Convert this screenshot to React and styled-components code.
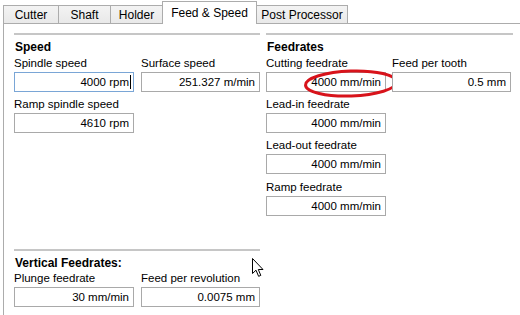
import React from "react";
import styled, { createGlobalStyle } from "styled-components";

const Global = createGlobalStyle`
  html, body { margin: 0; padding: 0; background: #fff; }
  body { width: 520px; height: 315px; overflow: hidden; font-family: "Liberation Sans", Arial, sans-serif; font-size: 11.5px; color: #000; }
`;

const Window = styled.div`
  width: 520px;
  height: 315px;
  display: flex;
  flex-direction: column;
  background: #fff;
  position: relative;
`;

const TabStrip = styled.div`
  display: flex;
  align-items: flex-end;
  height: 23px;
  padding-left: 3px;
  box-sizing: border-box;
`;

const Tab = styled.div`
  box-sizing: border-box;
  display: flex;
  align-items: center;
  justify-content: center;
  width: ${p => p.$w}px;
  height: ${p => (p.$active ? 23 : 18)}px;
  margin-left: -1px;
  margin-bottom: ${p => (p.$active ? -1 : 0)}px;
  border: 1px solid #acacac;
  border-bottom: none;
  background: ${p => (p.$active ? "#fff" : "linear-gradient(#f3f3f3, #e9e9e9)")};
  position: relative;
  z-index: ${p => (p.$active ? 2 : 1)};
  padding-top: ${p => (p.$active ? 0 : 1)}px;
  font-size: 12px;
  &:first-child { margin-left: 0; }
`;

const Panel = styled.div`
  flex: 1;
  border-top: 1px solid #acacac;
  border-left: 1px solid #acacac;
  margin-left: 3px;
  padding: 9px 0 0 10px;
  display: grid;
  grid-template-columns: 246px 247px;
  column-gap: 6px;
  position: relative;
`;

const Column = styled.div`
  display: flex;
  flex-direction: column;
`;

const Section = styled.section`
  display: flex;
  flex-direction: column;
  margin-top: ${p => p.$top || 0}px;
`;

const Rule = styled.div`
  height: 2px;
  background: #c6c6c6;
`;

const Heading = styled.div`
  font-weight: bold;
  font-size: 12px;
  line-height: 14px;
  margin: 5px 0 0 1px;
`;

const Row = styled.div`
  display: grid;
  grid-template-columns: 120px 119px;
  column-gap: ${p => p.$gap || 6}px;
`;

const Field = styled.div`
  display: flex;
  flex-direction: column;
  margin-top: ${p => p.$top ?? 5}px;
`;

const Label = styled.label`
  line-height: 14px;
  height: 14px;
  margin-bottom: 2px;
  white-space: nowrap;
`;

const InputWrap = styled.div`
  position: relative;
`;

const Box = styled.div`
  box-sizing: border-box;
  height: 20px;
  border: 1px solid ${p => (p.$focused ? "#7aa6d6" : "#a9a9a9")};
  background: #fff;
  display: flex;
  align-items: center;
  justify-content: flex-end;
  padding-right: ${p => (p.$focused ? 2 : 4)}px;
  white-space: nowrap;
`;

const Caret = styled.span`
  display: inline-block;
  width: 1px;
  height: 14px;
  background: #000;
  margin-left: 1px;
`;

const Annotation = styled.svg`
  position: absolute;
  left: 38px;
  top: -3px;
  pointer-events: none;
  overflow: visible;
`;

const Pointer = styled.svg`
  position: absolute;
  left: 252px;
  top: 258px;
  overflow: visible;
`;

function Input({ value, focused, circled }) {
  return (
    <InputWrap>
      <Box $focused={focused}>
        {value}
        {focused && <Caret />}
      </Box>
      {circled && (
        <Annotation width="94" height="29" viewBox="0 0 94 29">
          <ellipse cx="47" cy="14.5" rx="45.5" ry="12.5" fill="none" stroke="#d8131b" strokeWidth="3" transform="rotate(-2 47 14.5)" />
        </Annotation>
      )}
    </InputWrap>
  );
}

function F({ label, value, focused, circled, top }) {
  return (
    <Field $top={top}>
      <Label>{label}</Label>
      <Input value={value} focused={focused} circled={circled} />
    </Field>
  );
}

const tabs = [
  ["Cutter", 56],
  ["Shaft", 53],
  ["Holder", 53],
  ["Feed & Speed", 95],
  ["Post Processor", 92],
];

export default function App() {
  return (
    <Window>
      <Global />
      <TabStrip>
        {tabs.map(([t, w]) => (
          <Tab key={t} $w={w} $active={t === "Feed & Speed"}>{t}</Tab>
        ))}
      </TabStrip>
      <Panel>
        <Column>
          <Section>
            <Rule />
            <Heading>Speed</Heading>
            <Row $gap={7}>
              <F top={2} label="Spindle speed" value="4000 rpm" focused />
              <F top={2} label="Surface speed" value="251.327 m/min" />
            </Row>
            <Row>
              <F label="Ramp spindle speed" value="4610 rpm" />
            </Row>
          </Section>
          <Section $top={116}>
            <Rule />
            <Heading>Vertical Feedrates:</Heading>
            <Row $gap={7}>
              <F top={1} label="Plunge feedrate" value="30 mm/min" />
              <F top={1} label="Feed per revolution" value="0.0075 mm" />
            </Row>
          </Section>
        </Column>
        <Column>
          <Section>
            <Rule />
            <Heading>Feedrates</Heading>
            <Row>
              <F top={2} label="Cutting feedrate" value="4000 mm/min" circled />
              <F top={2} label="Feed per tooth" value="0.5 mm" />
            </Row>
            <Row>
              <F label="Lead-in feedrate" value="4000 mm/min" />
            </Row>
            <Row>
              <F label="Lead-out feedrate" value="4000 mm/min" />
            </Row>
            <Row>
              <F top={6} label="Ramp feedrate" value="4000 mm/min" />
            </Row>
          </Section>
        </Column>
      </Panel>
      <Pointer width="13" height="20" viewBox="0 0 13 20">
        <path d="M0.5 0.5 L0.5 15.5 L4 12.2 L6.6 18.3 L8.8 17.4 L6.3 11.5 L11 11.5 Z" fill="#fff" stroke="#000" strokeWidth="1" strokeLinejoin="miter" />
      </Pointer>
    </Window>
  );
}
